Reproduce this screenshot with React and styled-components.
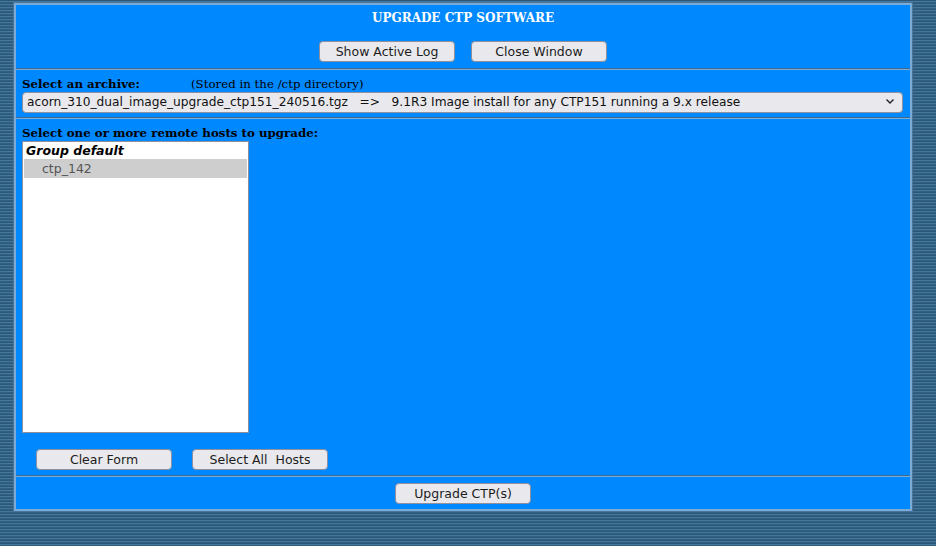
import React from "react";
import styled, { createGlobalStyle } from "styled-components";

const GlobalStyle = createGlobalStyle`
  html, body {
    margin: 0;
    padding: 0;
  }
  body {
    width: 936px;
    height: 546px;
    overflow: hidden;
    background: repeating-linear-gradient(
      to bottom,
      #2b5878 0px,
      #2b5878 1px,
      #44779c 1px,
      #44779c 2px,
      #335f80 2px,
      #335f80 3px
    );
    font-family: "DejaVu Serif", serif;
  }
`;

const Panel = styled.div`
  margin: 3px 0 0 14px;
  width: 894px;
  border: 2px solid #7aaad6;
  box-shadow: 0 0 0 1px #4a7396;
  background: #0088ff;
  display: flex;
  flex-direction: column;
`;

const Section = styled.div`
  display: flex;
  flex-direction: column;
  align-items: ${(p) => (p.$center ? "center" : "flex-start")};
  padding: ${(p) => p.$pad || "6px 6px 5px"};
  & + & {
    border-top: 1px solid #3f6a92;
    box-shadow: inset 0 1px 0 #7aaad6;
    padding-top: ${(p) => p.$padTop || "7px"};
  }
`;

const Title = styled.h1`
  margin: 0 0 15px;
  font-family: "DejaVu Serif", serif;
  font-weight: bold;
  font-size: 12px;
  line-height: 16px;
  color: #fff;
`;

const ButtonRow = styled.div`
  display: flex;
  gap: ${(p) => p.$gap || "16px"};
  padding-left: ${(p) => p.$indent || "0"};
  margin-top: ${(p) => p.$top || "0"};
`;

const Button = styled.button`
  width: 136px;
  height: 21px;
  padding: 0;
  font-family: "DejaVu Sans", sans-serif;
  font-size: 12.5px;
  color: #1c1c1c;
  background: #e9e9ed;
  border: 1px solid #8f8f9d;
  border-radius: 4px;
  white-space: pre;
`;

const LabelRow = styled.div`
  display: flex;
  align-items: baseline;
  height: ${(p) => p.$h || "15px"};
`;

const Label = styled.span`
  font-family: "DejaVu Serif", serif;
  font-weight: bold;
  font-size: 11.8px;
  line-height: 16px;
  color: #000;
  width: ${(p) => p.$width || "auto"};
`;

const Note = styled.span`
  font-family: "DejaVu Serif", serif;
  font-size: 11.8px;
  line-height: 16px;
  color: #000;
`;

const SelectWrap = styled.div`
  position: relative;
  margin-top: 1px;
  width: 881px;
  height: 21px;
`;

const ArchiveSelect = styled.select`
  appearance: none;
  width: 100%;
  height: 100%;
  font-family: "DejaVu Sans", sans-serif;
  font-size: 12.2px;
  color: #111;
  background: #e9e9ed;
  border: 1px solid #8f8f9d;
  border-radius: 4px;
  padding: 0 0 0 4px;
`;

const Chevron = styled.svg`
  position: absolute;
  right: 8px;
  top: 7px;
  pointer-events: none;
`;

const HostList = styled.select`
  width: 227px;
  height: 292px;
  font-family: "DejaVu Sans", sans-serif;
  font-size: 12.5px;
  background: #fff;
  border: 1px solid #8f8f9d;
  border-radius: 0;
  padding: 1px;
  outline: none;

  optgroup {
    font-weight: bold;
    font-style: italic;
    color: #000;
  }
  option {
    font-weight: normal;
    font-style: normal;
    color: #555;
    padding: 2px 4px 2px 18px;
  }
  option:checked {
    background: #cecece linear-gradient(#cecece, #cecece);
    color: #555;
  }
`;

export default function App() {
  return (
    <>
      <GlobalStyle />
      <Panel>
        <Section $center $pad="5px 6px 6px">
          <Title>UPGRADE CTP SOFTWARE</Title>
          <ButtonRow>
            <Button>Show Active Log</Button>
            <Button>Close Window</Button>
          </ButtonRow>
        </Section>
        <Section $padTop="7px">
          <LabelRow $h="14px">
            <Label $width="169px">Select an archive:</Label>
            <Note>(Stored in the /ctp directory)</Note>
          </LabelRow>
          <SelectWrap>
            <ArchiveSelect defaultValue="a">
              <option value="a">
                {"acorn_310_dual_image_upgrade_ctp151_240516.tgz\u00a0\u00a0\u00a0=>\u00a0\u00a0\u00a09.1R3 Image install for any CTP151 running a 9.x release"}
              </option>
            </ArchiveSelect>
            <Chevron width="10" height="7" viewBox="0 0 10 7">
              <path d="M1.5 1.5 L5 5 L8.5 1.5" fill="none" stroke="#222" strokeWidth="1.4" />
            </Chevron>
          </SelectWrap>
        </Section>
        <Section $padTop="7px">
          <LabelRow $h="16px">
            <Label>Select one or more remote hosts to upgrade:</Label>
          </LabelRow>
          <HostList multiple defaultValue={["ctp_142"]} size={15}>
            <optgroup label="Group default">
              <option value="ctp_142">ctp_142</option>
            </optgroup>
          </HostList>
          <ButtonRow $gap="20px" $indent="14px" $top="16px">
            <Button>Clear Form</Button>
            <Button>{"Select All  Hosts"}</Button>
          </ButtonRow>
        </Section>
        <Section $center $padTop="7px" $pad="7px 6px 5px">
          <Button>Upgrade CTP(s)</Button>
        </Section>
      </Panel>
    </>
  );
}
